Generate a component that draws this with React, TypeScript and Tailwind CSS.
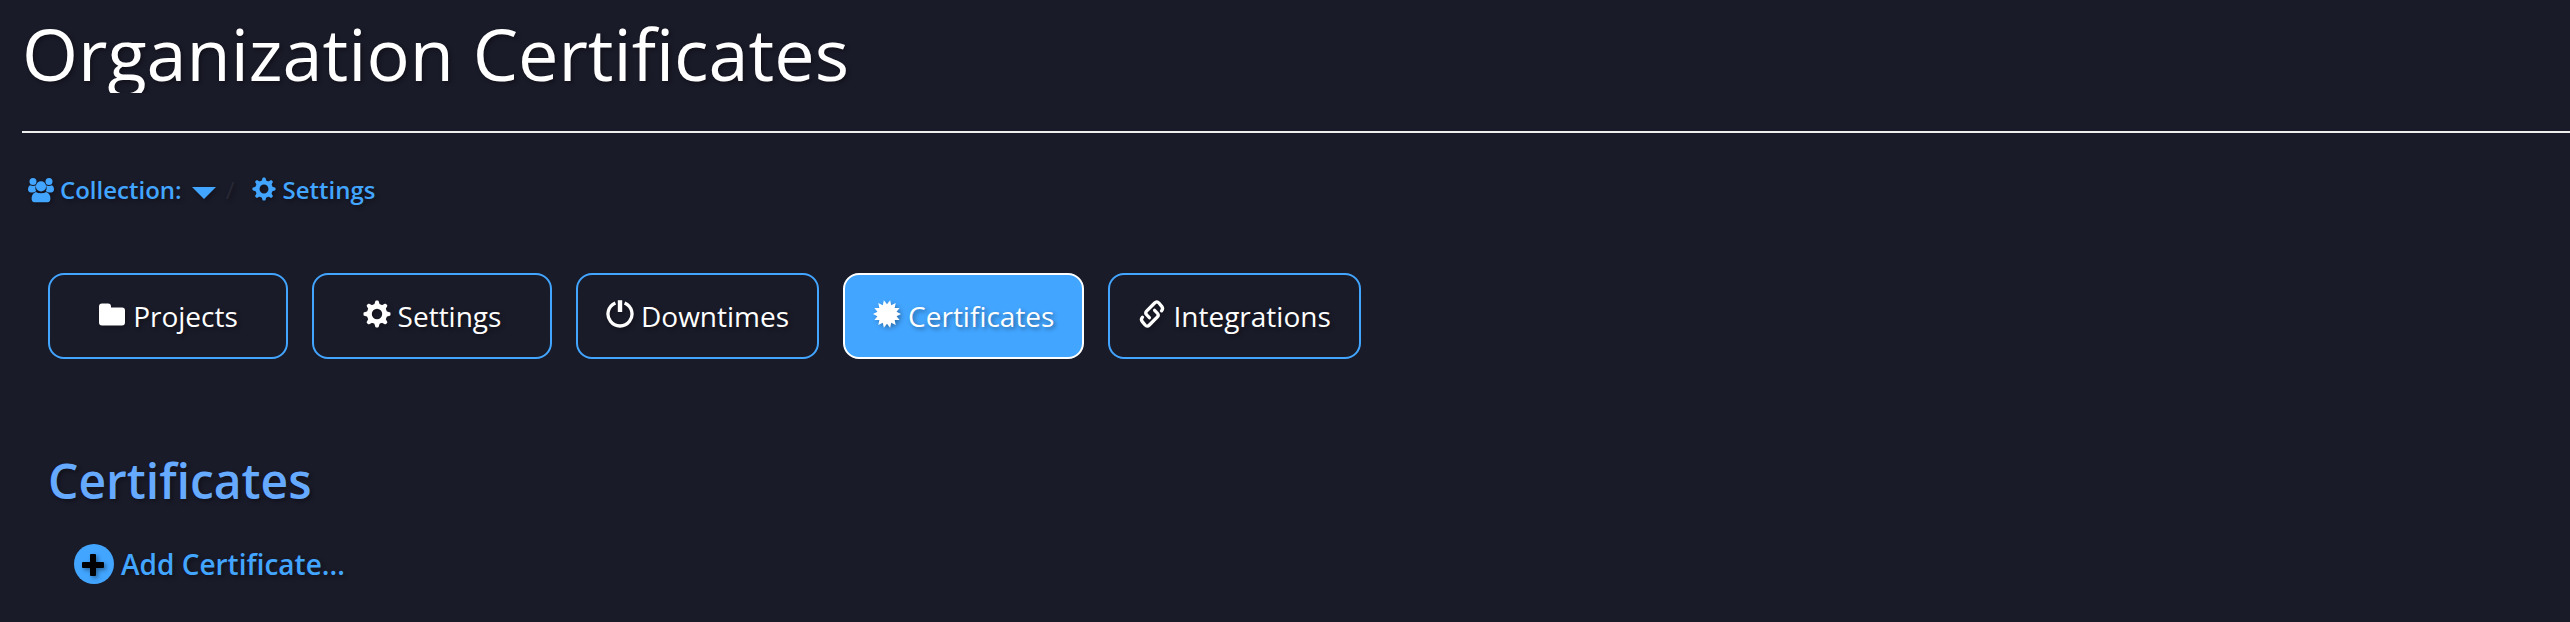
import type { ReactNode } from "react";

type IconProps = { className?: string };

function polar(cx: number, cy: number, r: number, deg: number) {
  const a = (deg * Math.PI) / 180;
  return `${(cx + r * Math.sin(a)).toFixed(2)},${(cy - r * Math.cos(a)).toFixed(2)}`;
}

// 14 pointed star
const burstPoints = Array.from({ length: 28 }, (_, i) =>
  polar(14, 14, i % 2 === 0 ? 14 : 9.8, (i + 1) * (360 / 28))
).join(" ");

function FolderIcon({ className }: IconProps) {
  return (
    <svg viewBox="0 0 28 28" fill="currentColor" className={className} aria-hidden="true">
      <path d="M1 6.5A3 3 0 0 1 4 3.5H10A3 3 0 0 1 13 6.5V7.5H24A3 3 0 0 1 27 10.5V22.5A3 3 0 0 1 24 25.5H4A3 3 0 0 1 1 22.5Z" />
    </svg>
  );
}

function GearIcon({ className }: IconProps) {
  return (
    <svg viewBox="0 0 28 28" fill="currentColor" className={className} aria-hidden="true">
      {[0, 45, 90, 135, 180, 225, 270, 315].map((deg) => (
        <path
          key={deg}
          d="M11 5.5L12.3 1.3Q12.5 .5 13.3 .5H14.7Q15.5 .5 15.7 1.3L17 5.5Z"
          transform={`rotate(${deg} 14 14)`}
        />
      ))}
      <circle cx="14" cy="14" r="7.7" fill="none" stroke="currentColor" strokeWidth="5" />
    </svg>
  );
}

function PowerIcon({ className }: IconProps) {
  return (
    <svg viewBox="0 0 28 28" fill="none" stroke="currentColor" className={className} aria-hidden="true">
      <path d="M18.6 2.9A12 12 0 1 1 9.4 2.9" strokeWidth="3.3" />
      <path d="M14 .2V12" strokeWidth="4.4" />
    </svg>
  );
}

function BurstIcon({ className }: IconProps) {
  return (
    <svg viewBox="0 0 28 28" fill="currentColor" className={className} aria-hidden="true">
      <polygon points={burstPoints} />
    </svg>
  );
}

function LinkIcon({ className }: IconProps) {
  const half = "M24.2 11.6Q26.4 9.2 24.4 6.8L21.4 3.2Q19.2 .8 16.8 3.2L8.2 11.8Q6.4 13.8 8.2 15.8L11.2 19";
  return (
    <svg
      viewBox="0 0 28 30"
      fill="none"
      stroke="currentColor"
      strokeWidth="3.5"
      strokeLinecap="round"
      className={className}
      aria-hidden="true"
    >
      <path d={half} />
      <path d={half} transform="rotate(180 14 15)" />
    </svg>
  );
}

function UsersIcon({ className }: IconProps) {
  return (
    <svg viewBox="0 0 26 26" fill="currentColor" className={className} aria-hidden="true">
      <circle cx="5" cy="4.4" r="3.5" />
      <circle cx="21" cy="4.4" r="3.5" />
      <path d="M2 8.3Q5 9.8 8 8.3Q6.6 12 8.4 14.1Q6.5 15.2 5 15.4H3Q0 15.2 0 12.2Q0 9.4 2 8.3Z" />
      <path d="M24 8.3Q21 9.8 18 8.3Q19.4 12 17.6 14.1Q19.5 15.2 21 15.4H23Q26 15.2 26 12.2Q26 9.4 24 8.3Z" />
      <circle cx="13" cy="9.4" r="5.1" />
      <path d="M7.8 15Q9.8 16.2 13 16.2Q16.2 16.2 18.2 15Q22.4 16.6 22.4 21.5Q22.4 25.2 19.6 25.2H6.4Q3.6 25.2 3.6 21.5Q3.6 16.6 7.8 15Z" />
    </svg>
  );
}

const iconShadow = "shrink-0 drop-shadow-[2px_2px_2px_rgba(0,0,0,0.3)]";

const tabs = [
  { label: "Projects", icon: FolderIcon, active: false },
  { label: "Settings", icon: GearIcon, active: false },
  { label: "Downtimes", icon: PowerIcon, active: false },
  { label: "Certificates", icon: BurstIcon, active: true },
  { label: "Integrations", icon: LinkIcon, active: false },
];

function Crumb({ icon, children }: { icon: ReactNode; children: ReactNode }) {
  return (
    <a href="#" className="flex items-center gap-1.5 text-[#42a5ff]">
      {icon}
      {children}
    </a>
  );
}

export default function App() {
  return (
    <div className="min-h-screen bg-[#1a1b29] pt-3 pl-[22px] font-['Open_Sans',sans-serif] text-white [text-shadow:2px_2px_4px_rgba(0,0,0,0.4)]">
      {/* Header */}
      <header className="border-b-2 border-[#eeeeee] pb-[38px]">
        <h1 className="h-[81px] overflow-hidden text-[72px] leading-[82px] font-normal">
          Organization Certificates
        </h1>
      </header>

      {/* Breadcrumb */}
      <nav aria-label="Breadcrumb" className="mt-[39px] flex h-9 items-center pl-1.5 text-2xl leading-9 font-semibold">
        <Crumb icon={<UsersIcon className={`size-[26px] ${iconShadow}`} />}>Collection:</Crumb>
        <button type="button" aria-label="Choose collection" className="ml-2.5 text-[#42a5ff]">
          <svg viewBox="0 0 24 12" fill="currentColor" className={`mt-1.5 h-3 w-6 ${iconShadow}`} aria-hidden="true">
            <path d="M0 0H24L12 12Z" />
          </svg>
        </button>
        <span className="mr-[18px] ml-2.5 font-normal text-[#272834]">/</span>
        <Crumb icon={<GearIcon className={`mb-0.5 size-6 ${iconShadow}`} />}>Settings</Crumb>
      </nav>

      {/* Tabs */}
      <nav aria-label="Organization" className="mt-[65px] flex flex-wrap gap-6 pl-[26px]">
        {tabs.map(({ label, icon: Icon, active }) => (
          <a
            key={label}
            href="#"
            aria-current={active ? "page" : undefined}
            className={`flex h-[86px] min-w-60 items-center justify-center gap-[7px] rounded-2xl border-2 px-7 text-[28px] ${
              active ? "border-white bg-[#42a5ff]" : "border-[#42a5ff]"
            }`}
          >
            <Icon className={`mb-1 size-7 ${iconShadow}`} />
            {label}
          </a>
        ))}
      </nav>

      {/* Certificates */}
      <main className="pt-[89px] pl-[26px]">
        <h2 className="text-5xl leading-[66px] font-semibold text-[#66aaff]">Certificates</h2>
        <button
          type="button"
          className="mt-[30px] ml-[26px] flex h-10 items-center gap-[7px] text-[28px] leading-10 font-semibold text-[#42a5ff] [text-shadow:inherit]"
        >
          <svg viewBox="0 0 40 40" className="size-10 shrink-0" aria-hidden="true">
            <circle cx="20" cy="20" r="20" fill="#42a5ff" />
            <path
              d="M17 10H21Q22 10 22 11V18H29Q30 18 30 19V23Q30 24 29 24H22V31Q22 32 21 32H17Q16 32 16 31V24H9Q8 24 8 23V19Q8 18 9 18H16V11Q16 10 17 10Z"
              fill="#000"
              className="drop-shadow-[2px_2px_2px_rgba(0,0,0,0.4)]"
            />
          </svg>
          Add Certificate...
        </button>
      </main>
    </div>
  );
}
